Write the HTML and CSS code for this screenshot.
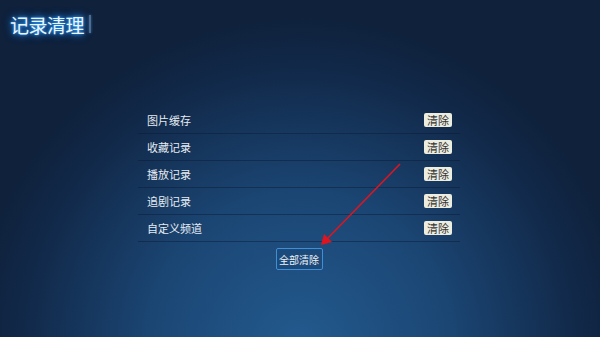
FILE: index.html
```html
<!DOCTYPE html>
<html lang="zh-CN">
<head>
    <meta charset="UTF-8">
    <title>记录清理</title>
    <link rel="stylesheet" href="styles.css">
</head>
<body>
    <div class="header">
        <h1>记录清理</h1>
        <span class="bar"></span>
    </div>
    <div class="panel">
        <ul class="list">
            <li><span>图片缓存</span><button class="clear">清除</button></li>
            <li><span>收藏记录</span><button class="clear">清除</button></li>
            <li><span>播放记录</span><button class="clear">清除</button></li>
            <li><span>追剧记录</span><button class="clear">清除</button></li>
            <li><span>自定义频道</span><button class="clear">清除</button></li>
        </ul>
        <button class="clear-all">全部清除</button>
    </div>
    <svg class="arrow" width="600" height="337" viewBox="0 0 600 337">
        <line x1="400" y1="164" x2="327" y2="239" stroke="#e0141e" stroke-width="1.6"/>
        <polygon points="321,245 324,234 332,242" fill="#e0141e"/>
    </svg>
</body>
</html>
```

FILE: styles.css
```css
* {
    box-sizing: border-box;
    margin: 0;
    padding: 0;
}
html, body {
    width: 600px;
    height: 337px;
    overflow: hidden;
}
body {
    font-family: "Noto Sans CJK SC", "Liberation Sans", sans-serif;
    background: radial-gradient(ellipse 330px 330px at 300px 345px, #235a8e 0%, #1b4674 45%, #112848 85%, #0f213b 100%);
    background-color: #0f213b;
    color: #e8eef5;
    position: relative;
}
.header {
    display: flex;
    align-items: center;
    height: 48px;
    padding-left: 10px;
}
.header h1 {
    font-size: 19px;
    font-weight: normal;
    color: #eaf6ff;
    letter-spacing: -0.5px;
    text-shadow: 0 0 3px #3aa8ff, 0 0 7px #1f7fe0, 0 0 10px #1a6cc8;
}
.bar {
    width: 2px;
    height: 18px;
    margin-left: 5px;
    background: rgba(160, 200, 235, 0.45);
    box-shadow: 0 0 3px rgba(80, 160, 240, 0.6);
}
.panel {
    width: 322px;
    margin: 59px 0 0 138px;
    display: flex;
    flex-direction: column;
    align-items: center;
}
.list {
    list-style: none;
    width: 100%;
}
.list li {
    display: flex;
    align-items: center;
    justify-content: space-between;
    height: 27px;
    padding: 0 8px 0 9px;
    border-bottom: 1px solid rgba(10, 25, 50, 0.45);
    font-size: 11px;
    color: #e6ecf2;
}
.clear {
    width: 28px;
    height: 14px;
    border: none;
    border-radius: 2px;
    background: #ececdf;
    color: #333;
    font-family: "Noto Sans CJK SC", sans-serif;
    font-size: 11px;
    line-height: 14px;
}
.clear-all {
    margin-top: 6px;
    width: 47px;
    height: 22px;
    border: 1px solid #3e8fd6;
    border-radius: 2px;
    background: #1c4a7a;
    color: #f0f4f8;
    font-family: "Noto Sans CJK SC", sans-serif;
    font-size: 10px;
}
.arrow {
    position: absolute;
    left: 0;
    top: 0;
}
```
